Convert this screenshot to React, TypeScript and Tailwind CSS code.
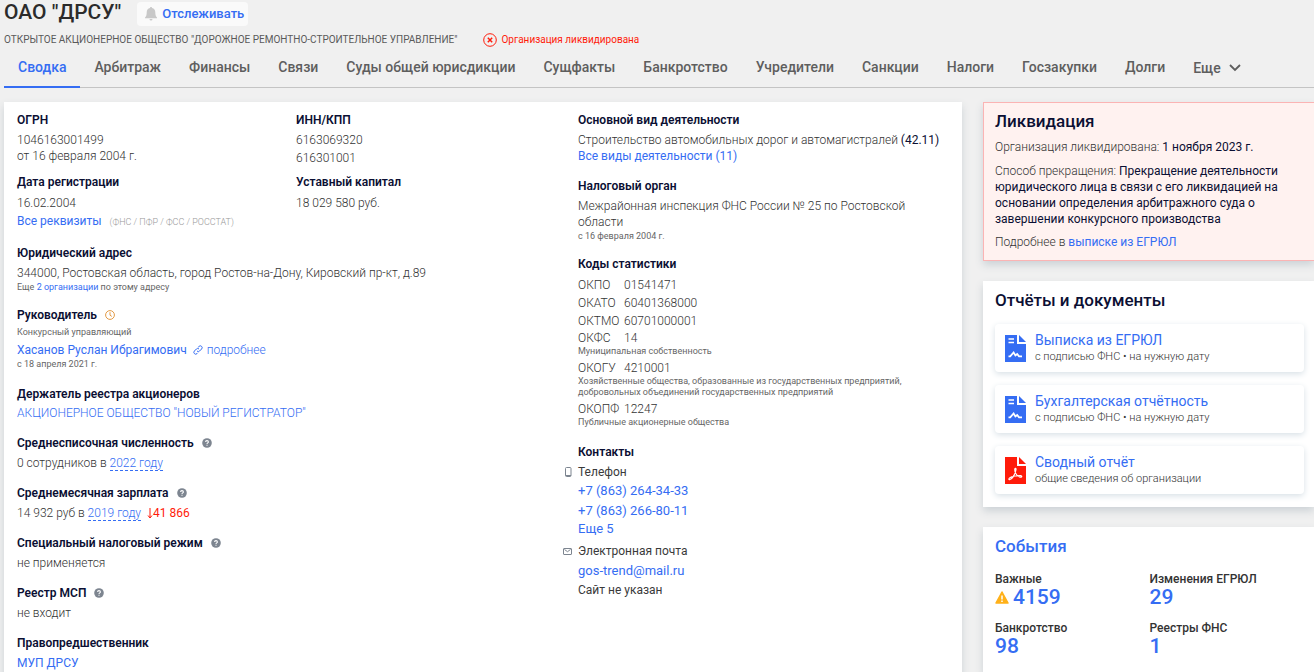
import type { ReactNode } from "react";

const tabs = [
  "Арбитраж",
  "Финансы",
  "Связи",
  "Суды общей юрисдикции",
  "Сущфакты",
  "Банкротство",
  "Учредители",
  "Санкции",
  "Налоги",
  "Госзакупки",
  "Долги",
];

const reports = [
  { title: "Выписка из ЕГРЮЛ", note: "с подписью ФНС • на нужную дату", pdf: false },
  { title: "Бухгалтерская отчётность", note: "с подписью ФНС • на нужную дату", pdf: false },
  { title: "Сводный отчёт", note: "общие сведения об организации", pdf: true },
];

const events = [
  { label: "Важные", count: "4159", warning: true },
  { label: "Изменения ЕГРЮЛ", count: "29", warning: false },
  { label: "Банкротство", count: "98", warning: false },
  { label: "Реестры ФНС", count: "1", warning: false },
];

function HelpIcon() {
  return (
    <svg viewBox="0 0 10 10" className="w-[10px] h-[10px]" aria-hidden="true">
      <circle cx="5" cy="5" r="4.8" fill="#7d8590" />
      <path
        d="M3.6 4.1c0-.9.6-1.5 1.4-1.5s1.4.5 1.4 1.3c0 1-1.4 1-1.4 2M5 6.8v1"
        fill="none"
        stroke="#fff"
        strokeWidth="1.1"
      />
    </svg>
  );
}

function ReportIcon({ pdf }: { pdf: boolean }) {
  return (
    <svg viewBox="0 0 21 27" className="w-[21px] h-[27px] shrink-0" aria-hidden="true">
      <path d="M0 0h12v9h9v18H0z" fill={pdf ? "#ff1b0a" : "#356df3"} />
      <path d="M14 0l7 7h-7z" fill={pdf ? "#ff1b0a" : "#356df3"} />
      {pdf ? (
        <path
          d="M4 22.5c-.8-1.800 4-4 12-3.800 1.500.6.5 2-1.500 1.200-2.800-1.200-5-4.500-4.700-8 .2-1 1.400-.8 1.200.6C10.600 17 6.500 23.500 4 22.500z"
          fill="none"
          stroke="#fff"
          strokeWidth="1.2"
          strokeLinejoin="round"
        />
      ) : (
        <>
          <path d="M3.500 4h5.500M3.500 7.500h5.500" stroke="#fff" strokeWidth="1.400" />
          <path
            d="M3.500 21.300h1.700l3.400-3.800 1.800 3 1.800-1.500 1.800 2.300h3"
            fill="none"
            stroke="#fff"
            strokeWidth="1.800"
          />
        </>
      )}
    </svg>
  );
}

function Title({ children }: { children: ReactNode }) {
  return (
    <h3 className="flex items-center gap-2 font-semibold text-[#0b0f33]">{children}</h3>
  );
}

function Link({ children, className = "" }: { children: ReactNode; className?: string }) {
  return (
    <a href="#" className={`text-[#356df3] ${className}`}>
      {children}
    </a>
  );
}

function Code({ name, value }: { name: string; value: string }) {
  return (
    <div className="flex">
      <dt className="w-[46px] shrink-0">{name}</dt>
      <dd>{value}</dd>
    </div>
  );
}

function Header() {
  return (
    <header className="pl-1">
      <div className="flex items-start gap-4 h-[31px]">
        <h1 className="text-[21px] leading-6 font-medium text-[#2b2b2b]">ОАО "ДРСУ"</h1>
        <button
          type="button"
          className="flex items-center gap-1 mt-[2px] h-6 pl-[7px] pr-1 rounded bg-[#fafafa] text-[13px] font-medium text-[#356df3]"
        >
          <svg viewBox="0 0 14 14" className="w-[14px] h-[14px]" fill="#c8c8c8" aria-hidden="true">
            <path d="M7 0c.6 0 1 .4 1 1 2.200.5 3.300 2.200 3.300 4.400 0 2.800.7 4 1.700 5v.8H1v-.8c1-1 1.700-2.200 1.700-5C2.700 3.200 3.800 1.500 6 1c0-.6.4-1 1-1zM5.500 12h3a1.500 1.500 0 0 1-3 0z" />
          </svg>
          Отслеживать
        </button>
      </div>
      <div className="flex items-center gap-[26px] h-[17px] text-[10px] text-[#5a5a5a]">
        <p>ОТКРЫТОЕ АКЦИОНЕРНОЕ ОБЩЕСТВО "ДОРОЖНОЕ РЕМОНТНО-СТРОИТЕЛЬНОЕ УПРАВЛЕНИЕ"</p>
        <p className="flex items-center gap-1 text-[#ff1b0a]">
          <svg viewBox="0 0 14 14" className="w-[14px] h-[14px]" fill="none" stroke="#ff1b0a" aria-hidden="true">
            <circle cx="7" cy="7" r="6.300" />
            <path d="M4.800 4.800l4.400 4.400M9.200 4.800L4.800 9.200" strokeWidth="1.500" />
          </svg>
          Организация ликвидирована
        </p>
      </div>
      <nav className="flex h-10 border-b border-[#c4c4c4] text-[14px] leading-[38px] font-medium text-[#5e5e5e]">
        <a href="#" className="h-10 px-[14px] border-b-2 border-[#356df3] text-[#356df3]">
          Сводка
        </a>
        {tabs.map((tab) => (
          <a key={tab} href="#" className="px-[14px]">
            {tab}
          </a>
        ))}
        <button type="button" className="flex items-center gap-2 px-[14px]">
          Еще
          <svg viewBox="0 0 12 8" className="w-3 h-2" fill="none" stroke="#5e5e5e" strokeWidth="1.800" aria-hidden="true">
            <path d="M1 1l5 5 5-5" />
          </svg>
        </button>
      </nav>
    </header>
  );
}

function Summary() {
  return (
    <section className="min-w-0">
      <div className="grid grid-cols-2 pr-[3px]">
        <div>
          <Title>ОГРН</Title>
          <p className="mt-1">1046163001499</p>
          <p>от 16 февраля 2004 г.</p>
        </div>
        <div>
          <Title>ИНН/КПП</Title>
          <p className="mt-1">6163069320</p>
          <p className="mt-[2px]">616301001</p>
        </div>
        <div className="mt-2">
          <Title>Дата регистрации</Title>
          <p className="mt-[5px]">16.02.2004</p>
        </div>
        <div className="mt-2">
          <Title>Уставный капитал</Title>
          <p className="mt-[5px]">18 029 580 руб.</p>
        </div>
      </div>
      <p className="mt-[2px]">
        <Link className="font-normal">Все реквизиты</Link>
        <span className="ml-2 text-[9px] text-[#999999]">(ФНС / ПФР / ФСС / РОССТАТ)</span>
      </p>

      <div className="mt-[15px]">
        <Title>Юридический адрес</Title>
        <p className="mt-1">344000, Ростовская область, город Ростов-на-Дону, Кировский пр-кт, д.89</p>
        <p className="text-[9px] leading-3 font-normal text-[#666666]">
          Еще <Link>2 организации</Link> по этому адресу
        </p>
      </div>

      <div className="mt-[14px]">
        <Title>
          Руководитель
          <svg viewBox="0 0 10 10" className="w-[10px] h-[10px]" fill="none" stroke="#e39a45" aria-hidden="true">
            <circle cx="5" cy="5" r="4.400" />
            <path d="M5 2.200v3l1.800 1.200" />
          </svg>
        </Title>
        <p className="mt-[3px] text-[9px] leading-3 font-normal text-[#666666]">Конкурсный управляющий</p>
        <p className="flex items-center mt-1">
          <Link className="font-normal">Хасанов Руслан Ибрагимович</Link>
          <a href="#" className="flex items-center gap-1 ml-[6px] text-[#356df3]">
            <svg viewBox="0 0 10 10" className="w-[10px] h-[10px]" fill="none" stroke="#356df3" aria-hidden="true">
              <path d="M4 6a1.800 1.800 0 0 0 2.600 0l2-2A1.800 1.800 0 0 0 6 1.400l-.8.8M6 4a1.800 1.800 0 0 0-2.600 0l-2 2A1.800 1.800 0 0 0 4 8.600l.8-.8" />
            </svg>
            подробнее
          </a>
        </p>
        <p className="text-[9px] leading-3 font-normal text-[#666666]">с 18 апреля 2021 г.</p>
      </div>

      <div className="mt-4">
        <Title>Держатель реестра акционеров</Title>
        <p className="mt-[3px]">
          <Link>АКЦИОНЕРНОЕ ОБЩЕСТВО "НОВЫЙ РЕГИСТРАТОР"</Link>
        </p>
      </div>

      <div className="mt-[14px]">
        <Title>
          Среднесписочная численность <HelpIcon />
        </Title>
        <p className="mt-1">
          0 сотрудников в <Link className="border-b border-dashed border-[#356df3]">2022 году</Link>
        </p>
      </div>

      <div className="mt-[14px]">
        <Title>
          Среднемесячная зарплата <HelpIcon />
        </Title>
        <p className="flex items-center mt-1">
          <span>
            14 932 руб в <Link className="border-b border-dashed border-[#356df3]">2019 году</Link>
          </span>
          <span className="flex items-center ml-[6px] font-normal text-[#ff1b0a]">
            <svg viewBox="0 0 6 11" className="w-[6px] h-[11px]" fill="none" stroke="#ff1b0a" aria-hidden="true">
              <path d="M3 0v10M1 7.500l2 2.500 2-2.500" />
            </svg>
            41 866
          </span>
        </p>
      </div>

      <div className="mt-[14px]">
        <Title>
          Специальный налоговый режим <HelpIcon />
        </Title>
        <p className="mt-1">не применяется</p>
      </div>

      <div className="mt-[14px]">
        <Title>
          Реестр МСП <HelpIcon />
        </Title>
        <p className="mt-1">не входит</p>
      </div>

      <div className="mt-[14px]">
        <Title>Правопредшественник</Title>
        <p className="mt-1">
          <Link className="font-normal">МУП ДРСУ</Link>
        </p>
      </div>
    </section>
  );
}

function Details() {
  return (
    <section className="min-w-0">
      <Title>Основной вид деятельности</Title>
      <p className="mt-1">
        Строительство автомобильных дорог и автомагистралей{" "}
        <span className="font-normal text-[#0b0f33]">(42.11)</span>
      </p>
      <p>
        <Link className="font-normal">Все виды деятельности (11)</Link>
      </p>

      <div className="mt-[14px]">
        <Title>Налоговый орган</Title>
        <p className="mt-1">
          Межрайонная инспекция ФНС России № 25 по Ростовской
          <br />
          области
        </p>
        <p className="text-[9px] leading-3 font-normal text-[#666666]">с 16 февраля 2004 г.</p>
      </div>

      <div className="mt-[14px]">
        <Title>Коды статистики</Title>
        <dl className="mt-1">
          <div className="leading-[18px]">
            <Code name="ОКПО" value="01541471" />
            <Code name="ОКАТО" value="60401368000" />
            <Code name="ОКТМО" value="60701000001" />
          </div>
          <Code name="ОКФС" value="14" />
          <dd className="text-[9px] leading-[11px] font-normal text-[#666666]">Муниципальная собственность</dd>
          <div className="mt-[3px]">
            <Code name="ОКОГУ" value="4210001" />
          </div>
          <dd className="text-[9px] leading-[11px] font-normal text-[#666666]">
            Хозяйственные общества, образованные из государственных предприятий,
            <br />
            добровольных объединений государственных предприятий
          </dd>
          <div className="mt-[3px]">
            <Code name="ОКОПФ" value="12247" />
          </div>
          <dd className="text-[9px] leading-[11px] font-normal text-[#666666]">Публичные акционерные общества</dd>
        </dl>
      </div>

      <div className="mt-4 font-normal text-[#3a3a3a]">
        <Title>Контакты</Title>
        <p className="flex items-center gap-[6px] -ml-[14px] mt-1">
          <svg viewBox="0 0 8 10" className="w-2 h-[10px]" fill="none" stroke="#7d8590" aria-hidden="true">
            <rect x="1.500" y=".5" width="5.500" height="9" rx="1" />
            <path d="M1.500 8.500H7" />
          </svg>
          Телефон
        </p>
        <p className="mt-[3px] text-[13px] leading-4">
          <Link>+7 (863) 264-34-33</Link>
        </p>
        <p className="mt-1 text-[13px] leading-4">
          <Link>+7 (863) 266-80-11</Link>
        </p>
        <p className="mt-[2px] text-[13px] leading-4">
          <Link>Еще 5</Link>
        </p>
        <p className="flex items-center gap-[6px] -ml-[15px] mt-[6px]">
          <svg viewBox="0 0 9 7" className="w-[9px] h-[7px]" fill="none" stroke="#7d8590" aria-hidden="true">
            <rect x=".5" y=".5" width="8" height="6" rx=".5" />
            <path d="M1.500 1.500l3 2.200 3-2.200" />
          </svg>
          Электронная почта
        </p>
        <p className="mt-1 text-[13px] leading-4">
          <Link>gos-trend@mail.ru</Link>
        </p>
        <p className="mt-[3px]">Сайт не указан</p>
      </div>
    </section>
  );
}

function Sidebar() {
  return (
    <aside className="w-[331px] shrink-0 flex flex-col gap-5">
      <section className="border border-r-0 border-[#fbb4b4] bg-[#fff2f0] pl-[11px] pr-5 pt-2 pb-[10px] shadow-[0_4px_8px_#ccd2d6]">
        <h2 className="text-[17px] leading-5 font-medium text-[#0b0f33]">Ликвидация</h2>
        <p className="mt-2">
          Организация ликвидирована: <span className="font-normal text-[#0b0f33]">1 ноября 2023 г.</span>
        </p>
        <p className="mt-2">
          Способ прекращения:{" "}
          <span className="font-normal text-[#0b0f33]">
            Прекращение деятельности
            <br />
            юридического лица в связи с его ликвидацией на
            <br />
            основании определения арбитражного суда о
            <br />
            завершении конкурсного производства
          </span>
        </p>
        <p className="mt-[7px]">
          Подробнее в <Link className="font-normal">выписке из ЕГРЮЛ</Link>
        </p>
      </section>

      <section className="bg-white pl-3 pr-[10px] pt-[9px] pb-[13px] shadow-[0_4px_8px_#ccd2d6]">
        <h2 className="text-[17px] leading-5 font-medium text-[#0b0f33]">Отчёты и документы</h2>
        <div className="flex flex-col gap-[13px] mt-[14px]">
          {reports.map((report) => (
            <a
              key={report.title}
              href="#"
              className="flex items-center gap-[9px] h-12 px-[10px] rounded shadow-[0_2px_6px_#d8e0e6]"
            >
              <ReportIcon pdf={report.pdf} />
              <span>
                <span className="block text-[14px] leading-[18px] font-normal text-[#356df3]">{report.title}</span>
                <span className="block text-[11px] leading-4 font-light">{report.note}</span>
              </span>
            </a>
          ))}
        </div>
      </section>

      <section className="bg-white pl-3 pr-[10px] pt-[9px] pb-4 shadow-[0_4px_8px_#ccd2d6]">
        <h2 className="text-[17px] leading-5 font-medium">
          <Link>События</Link>
        </h2>
        <div className="grid grid-cols-2 gap-y-[13px] mt-[15px]">
          {events.map((event) => (
            <div key={event.label} className="font-medium">
              <p className="text-[12px] leading-4 text-[#333333]">{event.label}</p>
              <a href="#" className="flex items-center gap-1 text-[21px] leading-5 text-[#356df3]">
                {event.warning && (
                  <svg viewBox="0 0 14 13" className="w-[14px] h-[13px]" aria-hidden="true">
                    <path d="M7 1l6 11H1z" fill="#ffb11a" stroke="#ffb11a" strokeWidth="1.500" strokeLinejoin="round" />
                    <path d="M7 4.500v4M7 9.500v1.500" stroke="#fff" strokeWidth="1.500" />
                  </svg>
                )}
                {event.count}
              </a>
            </div>
          ))}
        </div>
      </section>
    </aside>
  );
}

export default function App() {
  return (
    <div className="h-screen overflow-hidden bg-[#f0f0f0] font-['Roboto','Liberation_Sans',sans-serif]">
      <Header />
      <main className="flex items-start gap-[21px] pl-1 mt-[14px] text-[12px] leading-4 font-light text-[#333333]">
        <div className="flex-1 min-w-0 grid grid-cols-[3fr_2fr] bg-white pl-[13px] pr-[10px] pt-[10px] pb-6 shadow-[0_4px_8px_#ccd2d6]">
          <Summary />
          <Details />
        </div>
        <Sidebar />
      </main>
    </div>
  );
}
